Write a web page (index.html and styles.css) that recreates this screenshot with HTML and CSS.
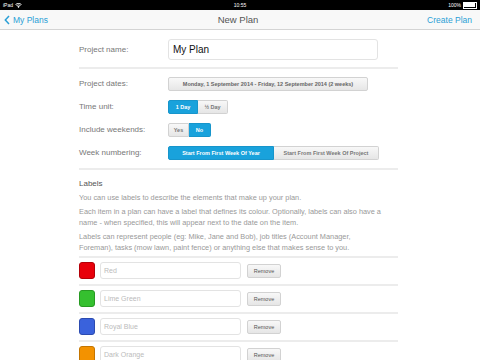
FILE: index.html
```html
<!DOCTYPE html>
<html lang="en">
<head>
    <meta charset="UTF-8">
    <title>New Plan</title>
    <link rel="stylesheet" href="styles.css">
</head>
<body>

    <div class="status-bar">
        <div class="status-left">iPad
            <svg class="wifi" width="7" height="5" viewBox="0 0 14 10"><path d="M7 10 L4.5 7 A4 4 0 0 1 9.5 7 Z M2.5 5 A7 7 0 0 1 11.5 5 L10.5 6 A5.5 5.5 0 0 0 3.5 6 Z M0.5 3 A10 10 0 0 1 13.5 3 L12.5 4 A8.5 8.5 0 0 0 1.5 4 Z" fill="#fff"/></svg>
        </div>
        <div class="status-time">10:55</div>
        <div class="status-right">100%
            <span class="battery"><span class="battery-fill"></span></span>
        </div>
    </div>

    <div class="navbar">
        <a class="nav-back">
            <svg width="6" height="10" viewBox="0 0 6 10"><path d="M5 1 L1.3 5 L5 9" fill="none" stroke="#2a9fd6" stroke-width="1.5"/></svg>
            My Plans
        </a>
        <div class="nav-title">New Plan</div>
        <a class="nav-action">Create Plan</a>
    </div>

    <div class="form">
        <div class="field name-field">
            <div class="field-label">Project name:</div>
            <div class="text-input name-input">My Plan</div>
        </div>

        <div class="separator"></div>

        <div class="field-group">
            <div class="field">
                <div class="field-label">Project dates:</div>
                <div class="btn dates-btn">Monday, 1 September 2014 - Friday, 12 September 2014 (2 weeks)</div>
            </div>
            <div class="field">
                <div class="field-label">Time unit:</div>
                <div class="segmented">
                    <div class="segment selected w30">1 Day</div>
                    <div class="segment w30">½ Day</div>
                </div>
            </div>
            <div class="field">
                <div class="field-label">Include weekends:</div>
                <div class="segmented">
                    <div class="segment w21">Yes</div>
                    <div class="segment selected w22">No</div>
                </div>
            </div>
            <div class="field">
                <div class="field-label">Week numbering:</div>
                <div class="segmented">
                    <div class="segment selected w106">Start From First Week Of Year</div>
                    <div class="segment w105">Start From First Week Of Project</div>
                </div>
            </div>
        </div>

        <div class="separator"></div>

        <div class="labels-info">
            <h3>Labels</h3>
            <p>You can use labels to describe the elements that make up your plan.</p>
            <p>Each item in a plan can have a label that defines its colour. Optionally, labels can also have a name - when specified, this will appear next to the date on the item.</p>
            <p>Labels can represent people (eg: Mike, Jane and Bob), job titles (Account Manager,<br>Foreman), tasks (mow lawn, paint fence) or anything else that makes sense to you.</p>
        </div>

        <div class="label-list">
            <div class="label-row">
                <div class="swatch red"></div>
                <div class="text-input label-input">Red</div>
                <div class="btn remove-btn">Remove</div>
            </div>
            <div class="label-row">
                <div class="swatch green"></div>
                <div class="text-input label-input">Lime Green</div>
                <div class="btn remove-btn">Remove</div>
            </div>
            <div class="label-row">
                <div class="swatch blue"></div>
                <div class="text-input label-input">Royal Blue</div>
                <div class="btn remove-btn">Remove</div>
            </div>
            <div class="label-row">
                <div class="swatch orange"></div>
                <div class="text-input label-input">Dark Orange</div>
                <div class="btn remove-btn">Remove</div>
            </div>
        </div>
    </div>

</body>
</html>
```

FILE: styles.css
```css
body {
    margin: 0;
    padding: 0;
    width: 480px;
    height: 360px;
    overflow: hidden;
    background-color: #ffffff;
    font-family: "Liberation Sans", Arial, sans-serif;
}

/* Status bar */
.status-bar {
    height: 10px;
    background-color: #000;
    color: #fff;
    font-size: 5px;
    display: flex;
    align-items: center;
    justify-content: space-between;
    padding: 0 3px;
}

.status-left,
.status-right {
    width: 60px;
    display: flex;
    align-items: center;
    gap: 2px;
}

.status-right {
    justify-content: flex-end;
}

.battery {
    width: 11px;
    height: 4px;
    border: 0.5px solid #fff;
    padding: 0.5px;
    display: flex;
}

.battery-fill {
    flex: 1;
    background-color: #fff;
}

/* Navigation bar */
.navbar {
    height: 19px;
    background-color: #f8f8f8;
    border-bottom: 1px solid #d4d4d4;
    display: flex;
    align-items: center;
    justify-content: space-between;
    padding: 0 8px 0 4px;
    font-size: 8.5px;
}

.nav-back,
.nav-action {
    color: #2a9fd6;
    width: 80px;
    display: flex;
    align-items: center;
    gap: 3px;
}

.nav-action {
    justify-content: flex-end;
}

.nav-title {
    color: #555;
    font-size: 9.5px;
}

/* Form */
.form {
    width: 319px;
    margin-left: 79px;
}

.field {
    display: flex;
    align-items: center;
    height: 23px;
}

.name-field {
    height: 21px;
    margin-top: 9px;
}

.field-label {
    width: 89px;
    flex-shrink: 0;
    color: #777;
    font-size: 8px;
}

.separator {
    height: 2px;
    background-color: #ececec;
}

.name-field + .separator {
    margin-top: 7px;
}

.field-group {
    padding: 3px 0 4px;
}

.text-input {
    box-sizing: border-box;
    border: 1px solid #e3e3e3;
    border-radius: 3px;
    background-color: #fff;
    display: flex;
    align-items: center;
}

.name-input {
    width: 210px;
    height: 21px;
    padding-left: 4px;
    font-size: 10px;
    color: #111;
}

.btn {
    box-sizing: border-box;
    border: 1px solid #d2d2d2;
    border-radius: 2px;
    background: linear-gradient(#f8f8f8, #e6e6e6);
    color: #666;
    font-size: 5.5px;
    font-weight: bold;
    display: flex;
    align-items: center;
    justify-content: center;
}

.dates-btn {
    width: 200px;
    height: 14px;
}

.segmented {
    display: flex;
}

.segment {
    box-sizing: border-box;
    height: 14px;
    border: 1px solid #d2d2d2;
    background: linear-gradient(#f8f8f8, #e6e6e6);
    color: #777;
    font-size: 5.5px;
    font-weight: bold;
    display: flex;
    align-items: center;
    justify-content: center;
}

.segment:first-child {
    border-radius: 2px 0 0 2px;
}

.segment:last-child {
    border-radius: 0 2px 2px 0;
    border-left: none;
}

.segment.selected {
    background: #19a2dc;
    border-color: #1795cb;
    color: #fff;
}

.w30 { width: 30px; }
.w21 { width: 21px; }
.w22 { width: 22px; }
.w106 { width: 106px; }
.w105 { width: 105px; }

/* Labels */
.labels-info {
    padding: 8px 0 3px;
}

.labels-info h3 {
    margin: 0;
    font-size: 8px;
    font-weight: normal;
    color: #555;
    line-height: 11px;
}

.labels-info p {
    margin: 3px 0 0;
    font-size: 7.35px;
    line-height: 11px;
    color: #999;
}

.label-row {
    display: flex;
    align-items: center;
    border-top: 2px solid #ececec;
    padding: 4px 0 5px;
}

.swatch {
    box-sizing: border-box;
    width: 16px;
    height: 17px;
    border-radius: 3px;
    margin-right: 5px;
}

.red { background-color: #e8000b; border: 1px solid #b30008; }
.green { background-color: #35c02f; border: 1px solid #279a22; }
.blue { background-color: #3a62dc; border: 1px solid #2c4bb0; }
.orange { background-color: #f39200; border: 1px solid #c47500; }

.label-input {
    width: 141px;
    height: 17px;
    padding-left: 3px;
    font-size: 7px;
    color: #bbb;
    margin-right: 6px;
}

.remove-btn {
    width: 34px;
    height: 14px;
    font-weight: normal;
    color: #555;
}
```
